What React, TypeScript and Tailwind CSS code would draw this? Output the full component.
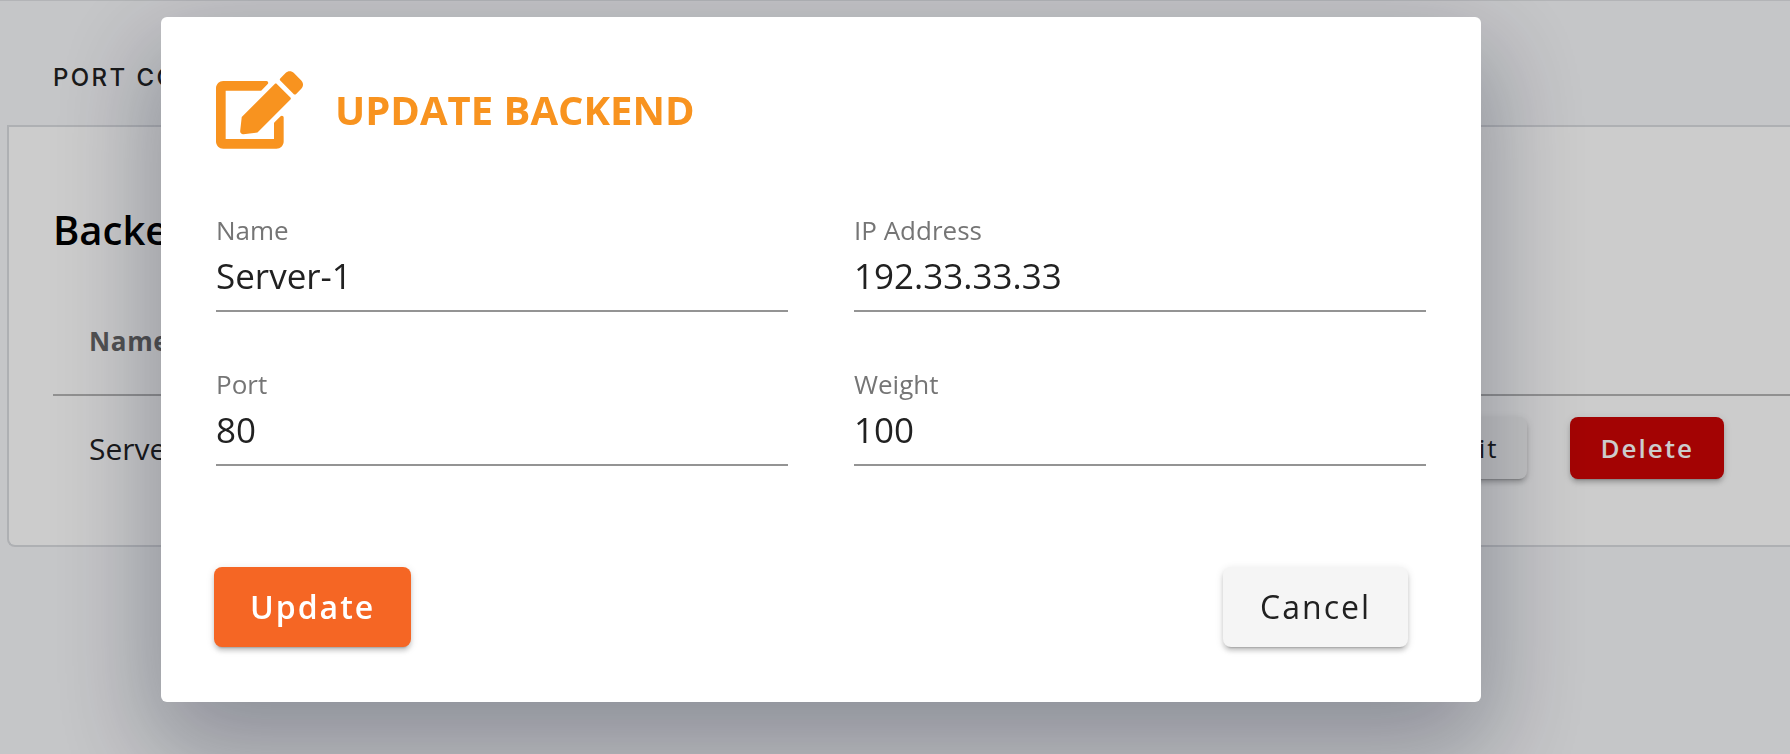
import { useState } from "react";
import type { ChangeEvent } from "react";
import { FaEdit } from "react-icons/fa";

interface Backend {
  name: string;
  ip: string;
  port: string;
  weight: string;
}

interface FieldProps {
  id: keyof Backend;
  label: string;
  value: string;
  onChange: (id: keyof Backend, value: string) => void;
}

const BUTTON_SHADOW =
  "shadow-[0_5px_2px_-4px_rgba(0,0,0,0.2),0_4px_4px_0_rgba(0,0,0,0.14),0_2px_9px_0_rgba(0,0,0,0.12)]";

function Field({ id, label, value, onChange }: FieldProps) {
  return (
    <div className="flex flex-col">
      <label htmlFor={id} className="text-[26px] leading-9 text-[#757575]">
        {label}
      </label>
      <input
        id={id}
        type="text"
        value={value}
        onChange={(e: ChangeEvent<HTMLInputElement>) => onChange(id, e.target.value)}
        className="h-16 w-full border-b-2 border-[#949494] pb-2 text-[35px] text-[#212121] outline-none"
      />
    </div>
  );
}

function BackendsPage({ backend }: { backend: Backend }) {
  return (
    <main className="min-h-screen border-t border-[#e0e2e5] bg-[#f7f8fa]">
      <nav className="flex h-31 items-center pt-[30px] pl-[53px]">
        <a
          href="#port"
          className="font-['Inter',sans-serif] text-2xl font-medium tracking-widest whitespace-nowrap text-[#212121]"
        >
          PORT CONFIGURATION
        </a>
      </nav>
      <section className="ml-[7px] rounded-bl-lg border-2 border-r-0 border-[#dadce0] bg-white pt-[76px] pb-[45px] pl-11">
        <h2 className="text-[40px] leading-[54px] font-semibold text-black">Backends</h2>
        <table className="w-full border-collapse text-left">
          <thead>
            <tr className="border-b-2 border-[#b5b5b5] text-[26px] leading-9 font-bold tracking-wide text-[#666666]">
              <th className="pt-[66px] pb-[35px] pl-9">Name</th>
              <th className="pt-[66px] pb-[35px]">IP Address</th>
              <th className="pt-[66px] pb-[35px]">Port</th>
              <th className="pt-[66px] pb-[35px]">Weight</th>
              <th />
            </tr>
          </thead>
          <tbody>
            <tr className="text-[30px] text-[#212121]">
              <td className="pl-9">{backend.name}</td>
              <td>{backend.ip}</td>
              <td>{backend.port}</td>
              <td>{backend.weight}</td>
              <td className="py-[21px] pr-[66px]">
                <div className="flex justify-end gap-[43px] text-[26px] font-medium tracking-[2px]">
                  <button
                    type="button"
                    className={`h-[62px] rounded-lg bg-[#f5f5f5] px-[29px] ${BUTTON_SHADOW}`}
                  >
                    Edit
                  </button>
                  <button
                    type="button"
                    className={`h-[62px] rounded-lg bg-[#cc0404] px-[30px] font-semibold text-white ${BUTTON_SHADOW}`}
                  >
                    Delete
                  </button>
                </div>
              </td>
            </tr>
          </tbody>
        </table>
      </section>
    </main>
  );
}

export default function App() {
  const [form, setForm] = useState<Backend>({
    name: "Server-1",
    ip: "192.33.33.33",
    port: "80",
    weight: "100",
  });

  const handleChange = (id: keyof Backend, value: string) =>
    setForm((prev) => ({ ...prev, [id]: value }));

  return (
    <div className="h-screen overflow-hidden font-['Open_Sans',sans-serif]">
      <BackendsPage backend={form} />
      <div className="fixed inset-0 overflow-hidden bg-black/20 pt-[17px] pr-[309px] pl-[161px]">
        <form
          role="dialog"
          aria-labelledby="dialog-title"
          onSubmit={(e) => e.preventDefault()}
          className="rounded-md bg-white px-[55px] pt-[54px] pb-[55px] shadow-[0_40px_100px_10px_rgba(8,14,40,0.3)]"
        >
          <header className="flex items-center gap-8 text-[#f8931f]">
            <FaEdit className="h-[78px] w-[87px] shrink-0" />
            <h1 id="dialog-title" className="text-[40px] leading-12 font-bold">
              UPDATE BACKEND
            </h1>
          </header>
          <div className="mt-[63px] grid grid-cols-2 gap-x-[66px] gap-y-[54px]">
            <Field id="name" label="Name" value={form.name} onChange={handleChange} />
            <Field id="ip" label="IP Address" value={form.ip} onChange={handleChange} />
            <Field id="port" label="Port" value={form.port} onChange={handleChange} />
            <Field id="weight" label="Weight" value={form.weight} onChange={handleChange} />
          </div>
          <footer className="mt-[101px] mr-[18px] -ml-0.5 flex justify-between text-[32px] font-medium tracking-[2px]">
            <button
              type="submit"
              className={`h-20 rounded-lg bg-[#f56624] px-9 font-semibold text-white ${BUTTON_SHADOW}`}
            >
              Update
            </button>
            <button
              type="button"
              className={`h-20 rounded-lg bg-[#f5f5f5] px-[37px] text-[#212121] ${BUTTON_SHADOW}`}
            >
              Cancel
            </button>
          </footer>
        </form>
      </div>
    </div>
  );
}
